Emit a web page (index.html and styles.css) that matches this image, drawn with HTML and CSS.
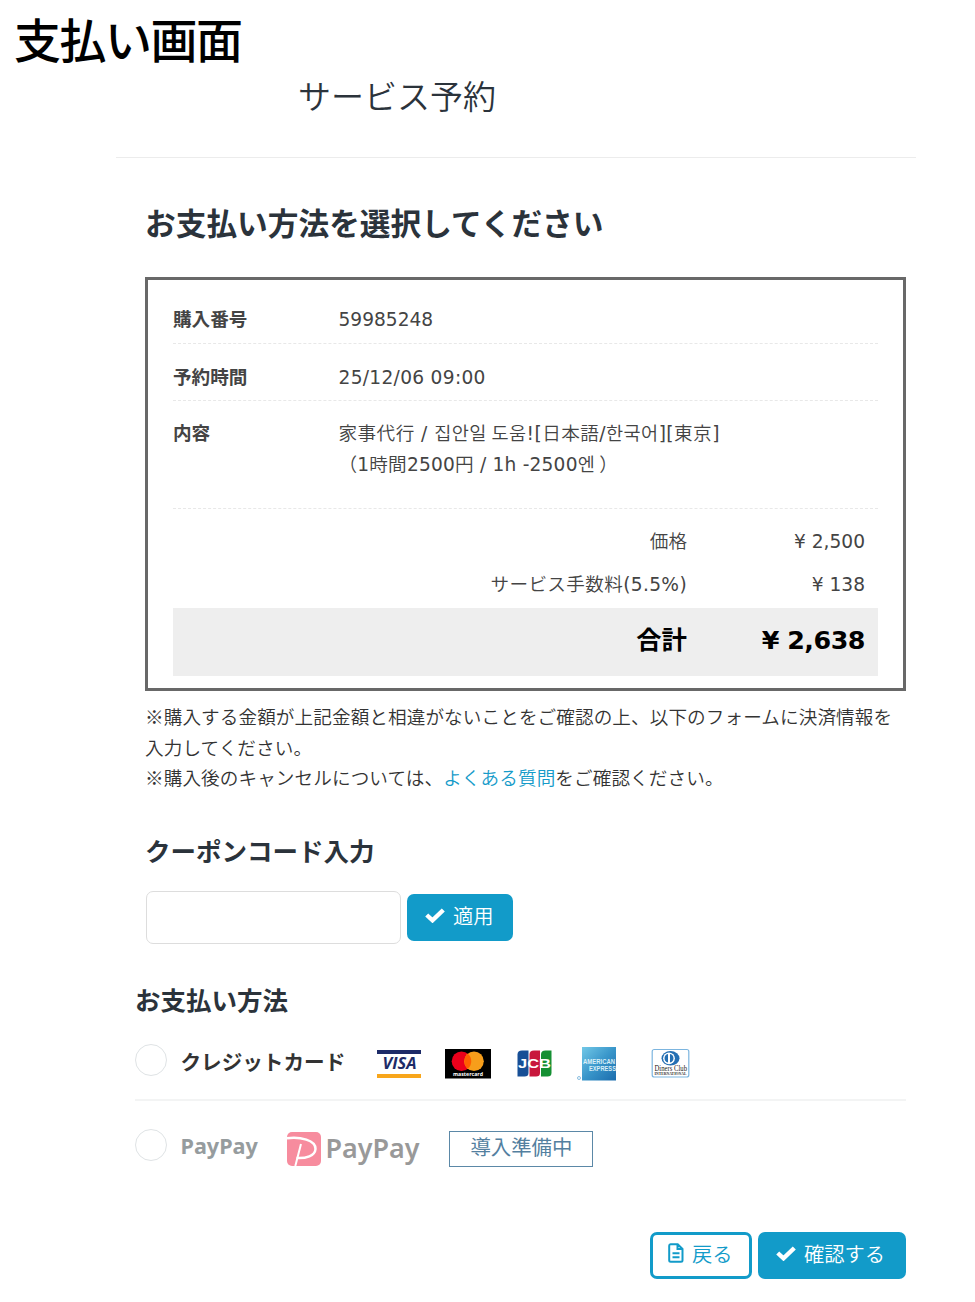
FILE: index.html
```html
<!DOCTYPE html>
<html lang="ja">
<head>
<meta charset="utf-8">
<title>支払い画面</title>
<link rel="stylesheet" href="styles.css">
</head>
<body>
<div class="caption">支払い画面</div>
<header class="page-header"><h1>サービス予約</h1></header>
<main class="content">
  <h2 class="lead">お支払い方法を選択してください</h2>

  <section class="summary">
    <dl class="details">
      <div class="row"><dt>購入番号</dt><dd class="num">59985248</dd></div>
      <div class="row"><dt>予約時間</dt><dd class="num date">25/12/06 09:00</dd></div>
      <div class="row row-content"><dt>内容</dt><dd><span class="service">家事代行<span class="num"> / </span><span class="ko">집안일 도움</span><span class="num">![</span>日本語<span class="num">/</span><span class="ko">한국어</span><span class="num">][</span>東京<span class="num">]</span></span><br><span class="plan">（<span class="num">1</span>時間<span class="num">2500</span>円<span class="num"> / 1h -2500</span><span class="ko">엔</span> ）</span></dd></div>
    </dl>
    <div class="price"><span>価格</span><span class="amount num">¥ 2,500</span></div>
    <div class="price"><span class="fee">サービス手数料<span class="num">(5.5%)</span></span><span class="amount num">¥ 138</span></div>
    <div class="price total"><span>合計</span><span class="amount">¥ 2,638</span></div>
  </section>

  <p class="notes">※購入する金額が上記金額と相違がないことをご確認の上、以下のフォームに決済情報を<br>入力してください。<br>※購入後のキャンセルについては、<a href="#">よくある質問</a>をご確認ください。</p>

  <h3 class="coupon-title">クーポンコード入力</h3>
  <div class="coupon">
    <input class="coupon-input" type="text" aria-label="クーポンコード">
    <button class="btn btn-apply"><svg class="check" viewBox="0 0 20 15"><path d="M1.700 7 7.500 12.300 18.300 2"/></svg><span>適用</span></button>
  </div>
</main>

<section class="methods">
  <h3>お支払い方法</h3>
  <div class="method card">
    <span class="radio"></span><span class="label">クレジットカード</span>
    <svg class="brands" viewBox="0 0 314 36">
      <g>
        <path fill="#1d2b68" d="M0 3h44v4H0z"/><path fill="#f8a61b" d="M0 27h44v4H0z"/>
        <text class="visa" x="5.500" y="22.300" textLength="34" lengthAdjust="spacingAndGlyphs">VISA</text>
      </g>
      <g>
        <path fill="#000" d="M68 2h46v29.500H68z"/>
        <circle cx="84.500" cy="14.300" r="9.800" fill="#eb001b"/><circle cx="97" cy="14.300" r="9.800" fill="#f79e1b"/>
        <path fill="#ff5f00" d="M90.750 6.800a9.800 9.800 0 0 1 0 15 9.800 9.800 0 0 1 0-15z"/>
        <text class="mastercard" x="76" y="28.600" textLength="30" lengthAdjust="spacingAndGlyphs">mastercard</text>
      </g>
      <g>
        <path fill="#174f96" d="M145 3.500h6.500v22.500q0 3.500-4 3.500h-7V7.500q0-4 4.500-4z"/>
        <path fill="#c8183c" d="M157 3.500h6V26q0 3.500-4 3.500h-6.500V7.500q0-4 4.500-4z"/>
        <path fill="#159033" d="M168.500 3.500h6V26q0 3.500-4 3.500H164V7.500q0-4 4.500-4z"/>
        <text class="jcb" x="141" y="20.500" textLength="33" lengthAdjust="spacingAndGlyphs">JCB</text>
      </g>
      <g>
        <defs><linearGradient id="amex" x1="0" y1="0" x2="1" y2="1"><stop offset="0" stop-color="#72c8e7"/><stop offset=".5" stop-color="#3996ca"/><stop offset="1" stop-color="#1b6cad"/></linearGradient></defs>
        <path fill="url(#amex)" d="M205 0h34v33.500h-34z"/>
        <text class="amex" x="206" y="16.500" textLength="32" lengthAdjust="spacingAndGlyphs">AMERICAN</text>
        <text class="amex" x="212" y="23.600" textLength="27" lengthAdjust="spacingAndGlyphs">EXPRESS</text>
        <circle cx="202" cy="31" r="1.500" fill="none" stroke="#6dafd8" stroke-width=".8"/>
      </g>
      <g>
        <rect x="275.200" y="2.500" width="36.600" height="27.500" rx="2" fill="#fff" stroke="#7cb5df" stroke-width="1.200"/>
        <ellipse cx="293.500" cy="11.300" rx="9" ry="7.300" fill="#246fb3"/><circle cx="292" cy="11.300" r="5.900" fill="#fff"/>
        <path fill="#246fb3" d="M291 7a4.400 4.400 0 0 0 0 8.600zM293 7a4.400 4.400 0 0 1 0 8.600z"/>
        <text class="diners" x="277.500" y="23.600" textLength="32.500" lengthAdjust="spacingAndGlyphs">Diners Club</text>
        <text class="diners-sub" x="277.500" y="28" textLength="32" lengthAdjust="spacingAndGlyphs">INTERNATIONAL</text>
      </g>
    </svg>
  </div>
  <div class="method paypay">
    <span class="radio"></span><span class="label">PayPay</span>
    <svg class="paypay-logo" viewBox="0 0 134 40">
      <rect x="0" y="1" width="34" height="34" rx="5" fill="#f78c9e"/>
      <path fill="none" stroke="#fff" stroke-width="2.500" d="M0 7.200C13 5.500 29 9 28.500 18 28 25 19 27.500 9.500 27"/>
      <path fill="none" stroke="#fff" stroke-width="2" d="M14 13 8.300 35"/>
      <text class="paypay-name" x="38.500" y="26.500" textLength="94" lengthAdjust="spacingAndGlyphs">PayPay</text>
    </svg>
    <span class="pending">導入準備中</span>
  </div>
  <div class="actions">
    <button class="btn btn-back"><svg class="doc" viewBox="0 0 16 20"><path d="M2.500 1.200h7.200L14.500 6v11.300q0 1.500-1.500 1.500H2.700q-1.500 0-1.500-1.500V2.700q0-1.500 1.300-1.500zM9.500 1.500V6h5M4.500 10.300h7M4.500 14.300h7"/></svg><span>戻る</span></button>
    <button class="btn btn-confirm"><svg class="check" viewBox="0 0 20 15"><path d="M1.700 7 7.500 12.300 18.300 2"/></svg><span>確認する</span></button>
  </div>
</section>
</body>
</html>
```
FILE: styles.css
```css
* { box-sizing: border-box; }
body {
  margin: 0;
  width: 975px;
  height: 1302px;
  overflow: hidden;
  background: #fff;
  color: #444;
  font: 18.6px/30.6px "DejaVu Sans", "Noto Sans CJK JP", sans-serif;
  white-space: nowrap;
}
h1, h2, h3, p, dl, dd { margin: 0; }
h1, h2, h3 { color: #2b333b; }
.caption {
  height: 71px;
  padding: 2px 0 0 14px;
  color: #000;
  font: 500 47px/72px "Noto Sans CJK JP", sans-serif;
  letter-spacing: -1.5px;
}
.page-header {
  height: 87px;
  margin: 0 59px 0 116px;
  padding-left: 182px;
  border-bottom: 1px solid #ececec;
}
h1 { font: 350 33px/48px "Noto Sans CJK JP", sans-serif; }
.content { margin: 0 69px 0 145px; }
.lead { padding-top: 42px; height: 119px; font: bold 30.7px/44px "Noto Sans CJK JP", sans-serif; }
.summary {
  width: 761px;
  height: 414px;
  padding: 21px 25px 0;
  border: 3px solid #686868;
}
.row {
  display: flex;
  height: 57px;
  padding-top: 19px;
  border-bottom: 1px dashed #e8e8e8;
}
.row:first-child { height: 43px; padding-top: 4px; }
.row-content { height: 108px; padding-top: 18px; }
dt { width: 165.500px; font-weight: bold; }
dd { font-weight: 300; }
.num { font-family: "DejaVu Sans", sans-serif; font-weight: 400; }
.date { letter-spacing: .3px; }
.service, .plan { font-family: "Noto Sans CJK JP", sans-serif; font-weight: 350; line-height: 1; }
.service { letter-spacing: .45px; }
.plan { letter-spacing: .2px; }
.fee { letter-spacing: .35px; }
.ko { font-family: "Noto Sans CJK KR", sans-serif; font-weight: 350; line-height: 1; }
.price {
  display: flex;
  justify-content: flex-end;
  align-items: flex-start;
  height: 43px;
  padding: 18px 13px 0 0;
}
.price + .price { height: 56px; }
.price > span:first-child {
  margin-top: -2px;
  font-family: "Noto Sans CJK JP", sans-serif;
  font-weight: 350;
}
.amount { width: 178px; text-align: right; }
.price.total {
  height: 68px;
  padding-top: 17px;
  background: #eee;
  color: #000;
  font-size: 25.4px;
  font-weight: bold;
}
.price.total > span:first-child { font-weight: bold; }
.total .amount { letter-spacing: -.5px; }
.notes {
  padding-top: 10px;
  color: #333;
  font-family: "Noto Sans CJK JP", sans-serif;
  font-weight: 350;
  letter-spacing: .1px;
}
.notes a { color: #159bc9; text-decoration: none; }
h3 { font: bold 25.5px/38px "Noto Sans CJK JP", sans-serif; }
.coupon-title { padding-top: 38px; height: 98px; }
.coupon { display: flex; align-items: center; gap: 6px; padding-left: 1px; }
.coupon-input {
  width: 255px;
  height: 53px;
  border: 1px solid #ddd;
  border-radius: 7px;
}
.btn {
  display: flex;
  align-items: center;
  height: 47px;
  padding: 0 0 4px 18px;
  border: 0;
  border-radius: 7px;
  background: #129bc9;
  color: #fff;
  font: 350 20.3px/30px "Noto Sans CJK JP", sans-serif;
}
.btn-apply { width: 106px; }
.check {
  width: 20px;
  height: 15px;
  margin-right: 8px;
  fill: none;
  stroke: #fff;
  stroke-width: 4.4;
}
.methods { margin: 0 69px 0 135px; padding-top: 36px; }
.method { display: flex; align-items: center; }
.radio { width: 32px; height: 32px; border: 1px solid #dfe3e5; border-radius: 50%; }
.label {
  margin-left: 13.500px;
  color: #333;
  font: bold 20.6px/30px "Noto Sans", "Noto Sans CJK JP", sans-serif;
}
.card { height: 83px; padding-top: 4px; border-bottom: 2px solid #f3f4f4; }
.card .label { padding-top: 3px; }
.brands { width: 314px; height: 36px; margin: 9px 0 0 31.500px; }
.visa { font: italic bold 15.5px "Open Sans", sans-serif; fill: #1d2b68; }
.mastercard { font: bold 5.500px "Open Sans", sans-serif; fill: #fff; }
.jcb { font: bold 12px "Liberation Sans", sans-serif; fill: #fff; }
.amex { font: bold 6.500px "Liberation Sans", sans-serif; fill: #d9eff8; }
.diners { font: 7.500px "Liberation Serif", serif; fill: #222; }
.diners-sub { font: bold 4px "Liberation Serif", serif; fill: #333; }
.paypay { height: 88px; }
.paypay .label { padding-top: 3px; color: #969c9e; font-size: 21.6px; }
.paypay-logo { width: 134px; height: 40px; margin: 13px 0 0 29.500px; overflow: visible; }
.paypay-name { font: 600 27px "Noto Sans", sans-serif; fill: #999; }
.pending {
  width: 144px;
  height: 36px;
  margin: 8px 0 0 28px;
  border: 1px solid #5b88a7;
  color: #537f9f;
  font: 20.4px/28px "Noto Sans CJK JP", sans-serif;
  text-align: center;
}
.actions { display: flex; justify-content: flex-end; gap: 6px; padding-top: 43px; }
.btn-back {
  width: 102px;
  padding-left: 15px;
  border: 3px solid #129bc9;
  background: #fff;
  color: #129bc9;
}
.doc {
  width: 16px;
  height: 20px;
  margin-right: 8px;
  fill: none;
  stroke: #129bc9;
  stroke-width: 2;
}
.btn-confirm { width: 148px; }
```
